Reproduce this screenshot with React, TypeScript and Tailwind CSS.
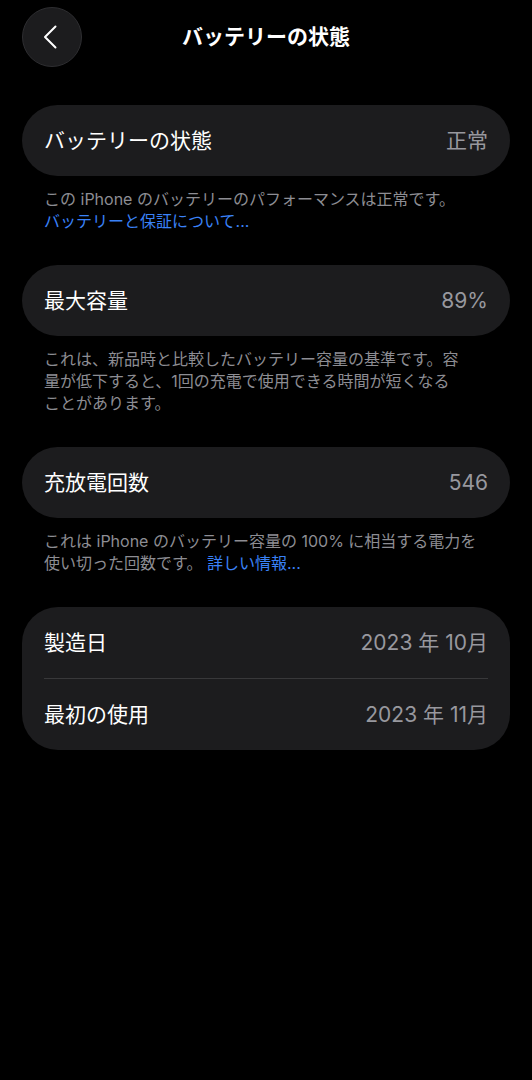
import { ReactNode } from "react";

const FONT = "[font-family:Inter,'Noto_Sans_CJK_JP',sans-serif]";

function Row({ label, value }: { label: string; value: string }) {
  return (
    <div className="flex h-[71px] items-center justify-between px-[22px]">
      <span className="text-[21px] text-white">{label}</span>
      <span className="text-[21px] text-[#98989e]">{value}</span>
    </div>
  );
}

function Section({ label, value, footer }: { label: string; value: string; footer: ReactNode }) {
  return (
    <section>
      <div className="rounded-[36px] bg-[#1c1c1e]">
        <Row label={label} value={value} />
      </div>
      <p className="px-[22px] pt-[12px] text-[16px] leading-[22px] text-[#8d8d93]">{footer}</p>
    </section>
  );
}

export default function App() {
  return (
    <div className={`min-h-[1080px] w-[532px] bg-black ${FONT}`}>
      <header className="grid grid-cols-[60px_1fr_60px] items-center px-[22px] pt-[7px]">
        <button className="flex h-[60px] w-[60px] items-center justify-center rounded-full border border-[#2e2e31] bg-[#1c1c1e]">
          <svg width="16" height="24" viewBox="0 0 16 24" fill="none" className="-ml-[5px]">
            <path d="M13.5 1.5 L3 12 L13.5 22.5" stroke="white" strokeWidth="2" strokeLinecap="round" strokeLinejoin="round" />
          </svg>
        </button>
        <h1 className="text-center text-[21px] font-bold text-white">バッテリーの状態</h1>
        <div />
      </header>

      <main className="mt-[38px] flex flex-col gap-[33px] px-[22px]">
        <Section
          label="バッテリーの状態"
          value="正常"
          footer={
            <>
              この iPhone のバッテリーのパフォーマンスは正常です。
              <br />
              <span className="text-[#3a82f7]">バッテリーと保証について...</span>
            </>
          }
        />
        <Section
          label="最大容量"
          value="89%"
          footer={
            <>
              これは、新品時と比較したバッテリー容量の基準です。容
              <br />
              量が低下すると、1回の充電で使用できる時間が短くなる
              <br />
              ことがあります。
            </>
          }
        />
        <Section
          label="充放電回数"
          value="546"
          footer={
            <>
              これは iPhone のバッテリー容量の 100% に相当する電力を
              <br />
              使い切った回数です。 <span className="text-[#3a82f7]">詳しい情報...</span>
            </>
          }
        />
        <section className="rounded-[36px] bg-[#1c1c1e]">
          <Row label="製造日" value="2023 年 10月" />
          <div className="mx-[22px] h-px bg-[#38383a]" />
          <Row label="最初の使用" value="2023 年 11月" />
        </section>
      </main>
    </div>
  );
}
